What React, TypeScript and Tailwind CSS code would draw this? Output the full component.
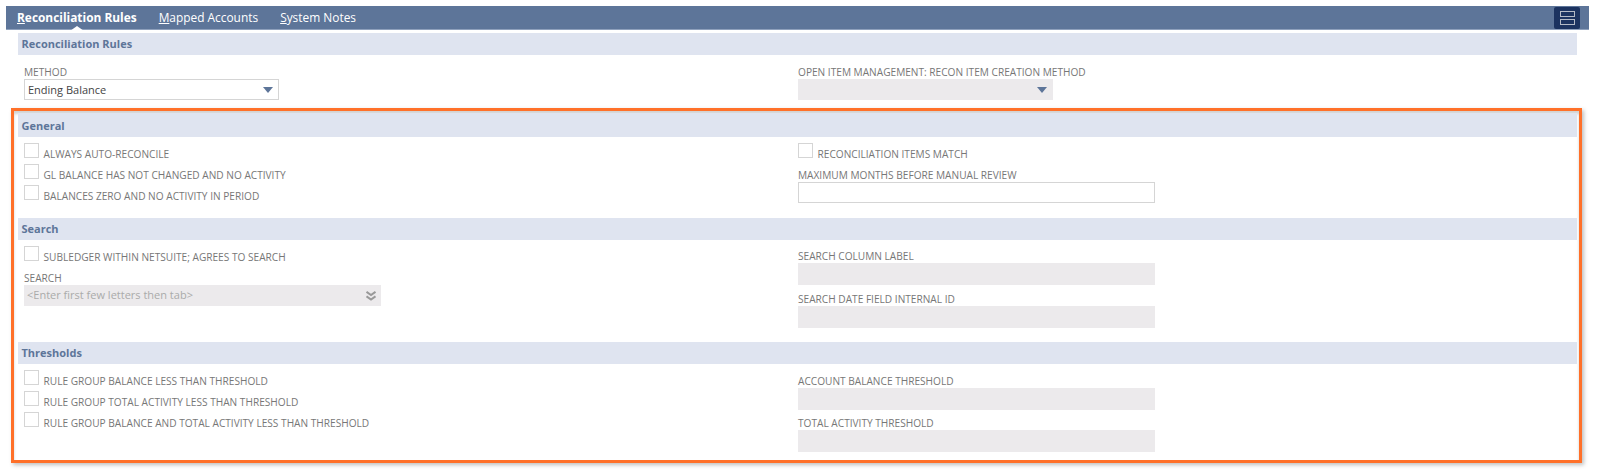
const CheckRow = ({ label }: { label: string }) => (
  <div className="flex h-[21px] items-start">
    <span className="h-[15px] w-[15px] shrink-0 border border-[#d5d5d5] bg-white" />
    <span className="ml-[4.5px] mt-[3.5px] text-[10.15px] leading-[15px] text-[#777]">{label}</span>
  </div>
);

const FieldLabel = ({ children }: { children: string }) => (
  <div className="h-[15px] text-[10.15px] leading-[17px] text-[#777]">{children}</div>
);

const Caret = () => (
  <svg width="10" height="6" viewBox="0 0 10 6">
    <path d="M0 0h10L5 6z" fill="#5d7599" />
  </svg>
);

const SectionBar = ({ title, className = "h-[22px] pt-[1px]" }: { title: string; className?: string }) => (
  <div className={`flex items-center bg-[#dfe4f0] pl-[3.5px] text-[11px] font-bold text-[#5d7599] ${className}`}>{title}</div>
);

const DisabledField = () => <div className="h-[21.5px] w-[357px] bg-[#eceaec]" />;

const App = () => {
  return (
    <div className="h-[472px] w-[1600px] overflow-hidden bg-white pl-[6px] pt-[6px] font-['Open_Sans',sans-serif]">
      {/* tab bar */}
      <div className="relative flex h-[24px] w-[1583px] items-center border-b border-[#8ea0bc] bg-[#5d7599] pl-[11px] text-[11.9px] text-white">
        <span className="relative mr-[22px] font-bold">
          <span className="underline">R</span>econciliation Rules
          <span className="absolute bottom-[-5px] left-1/2 h-0 w-0 -translate-x-1/2 border-x-[7px] border-b-[5px] border-x-transparent border-b-white" />
        </span>
        <span className="mr-[22px]">
          <span className="underline">M</span>apped Accounts
        </span>
        <span>
          <span className="underline">S</span>ystem Notes
        </span>
        <div className="ml-auto mr-[9px] flex h-[22px] w-[26px] flex-col items-center justify-center gap-[2px] rounded-[2px] bg-[#1c3360]">
          <span className="h-[6px] w-[15px] border border-[#b4bac6]" />
          <span className="h-[6px] w-[15px] border border-[#b4bac6]" />
        </div>
      </div>

      <div className="ml-[12px] mt-[3px] w-[1559px]">
        <SectionBar title="Reconciliation Rules" className="h-[22px]" />
      </div>

      <div className="ml-[18px] mt-[9px] grid h-[44px] grid-cols-[774px_1fr]">
        <div>
          <FieldLabel>METHOD</FieldLabel>
          <div className="flex h-[21px] w-[255px] items-center justify-between border border-[#d5d5d5] bg-white pl-[3px] pr-[5px] pt-[1px] text-[11px] text-[#444]">
            Ending Balance
            <Caret />
          </div>
        </div>
        <div>
          <FieldLabel>OPEN ITEM MANAGEMENT: RECON ITEM CREATION METHOD</FieldLabel>
          <div className="flex h-[21px] w-[255px] items-center justify-end bg-[#eceaec] pr-[6px]">
            <Caret />
          </div>
        </div>
      </div>

      {/* highlighted block */}
      <div className="ml-[5px] h-[355px] w-[1571px] border-[3px] border-[#ff7029] pl-[4px] pt-[2px] shadow-[2px_2px_4px_rgba(0,0,0,0.25),inset_0_3px_3px_rgba(0,0,0,0.18)]">
        <div className="w-[1559px]">
          <SectionBar title="General" className="h-[24px] pt-[3px]" />
          <div className="ml-[6px] mt-[6px] grid h-[75px] grid-cols-[774px_1fr]">
            <div>
              <CheckRow label="ALWAYS AUTO-RECONCILE" />
              <CheckRow label="GL BALANCE HAS NOT CHANGED AND NO ACTIVITY" />
              <CheckRow label="BALANCES ZERO AND NO ACTIVITY IN PERIOD" />
            </div>
            <div>
              <CheckRow label="RECONCILIATION ITEMS MATCH" />
              <div className="mt-[3px]">
                <FieldLabel>MAXIMUM MONTHS BEFORE MANUAL REVIEW</FieldLabel>
              </div>
              <div className="h-[21px] w-[357px] border border-[#d5d5d5] bg-white" />
            </div>
          </div>

          <SectionBar title="Search" />
          <div className="ml-[6px] mt-[6px] grid h-[96px] grid-cols-[774px_1fr]">
            <div>
              <CheckRow label="SUBLEDGER WITHIN NETSUITE; AGREES TO SEARCH" />
              <div className="mt-[3px]">
                <FieldLabel>SEARCH</FieldLabel>
              </div>
              <div className="flex h-[21px] w-[357px] items-center justify-between bg-[#eceaec] pl-[3px] pr-[5px] text-[11px] text-[#aaa]">
                {"<Enter first few letters then tab>"}
                <svg width="10" height="10" viewBox="0 0 10 10" fill="none" stroke="#999" strokeWidth="2">
                  <path d="M0.5 0.8l4.5 3.2 4.5-3.2M0.5 5.3l4.5 3.2 4.5-3.2" />
                </svg>
              </div>
            </div>
            <div className="flex flex-col gap-[6.5px] pt-[2px]">
              <div>
                <FieldLabel>SEARCH COLUMN LABEL</FieldLabel>
                <DisabledField />
              </div>
              <div>
                <FieldLabel>SEARCH DATE FIELD INTERNAL ID</FieldLabel>
                <DisabledField />
              </div>
            </div>
          </div>

          <SectionBar title="Thresholds" />
          <div className="ml-[6px] mt-[6px] grid grid-cols-[774px_1fr]">
            <div>
              <CheckRow label="RULE GROUP BALANCE LESS THAN THRESHOLD" />
              <CheckRow label="RULE GROUP TOTAL ACTIVITY LESS THAN THRESHOLD" />
              <CheckRow label="RULE GROUP BALANCE AND TOTAL ACTIVITY LESS THAN THRESHOLD" />
            </div>
            <div className="flex flex-col gap-[5.5px] pt-[3px]">
              <div>
                <FieldLabel>ACCOUNT BALANCE THRESHOLD</FieldLabel>
                <DisabledField />
              </div>
              <div>
                <FieldLabel>TOTAL ACTIVITY THRESHOLD</FieldLabel>
                <DisabledField />
              </div>
            </div>
          </div>
        </div>
      </div>
    </div>
  );
};

export default App;
